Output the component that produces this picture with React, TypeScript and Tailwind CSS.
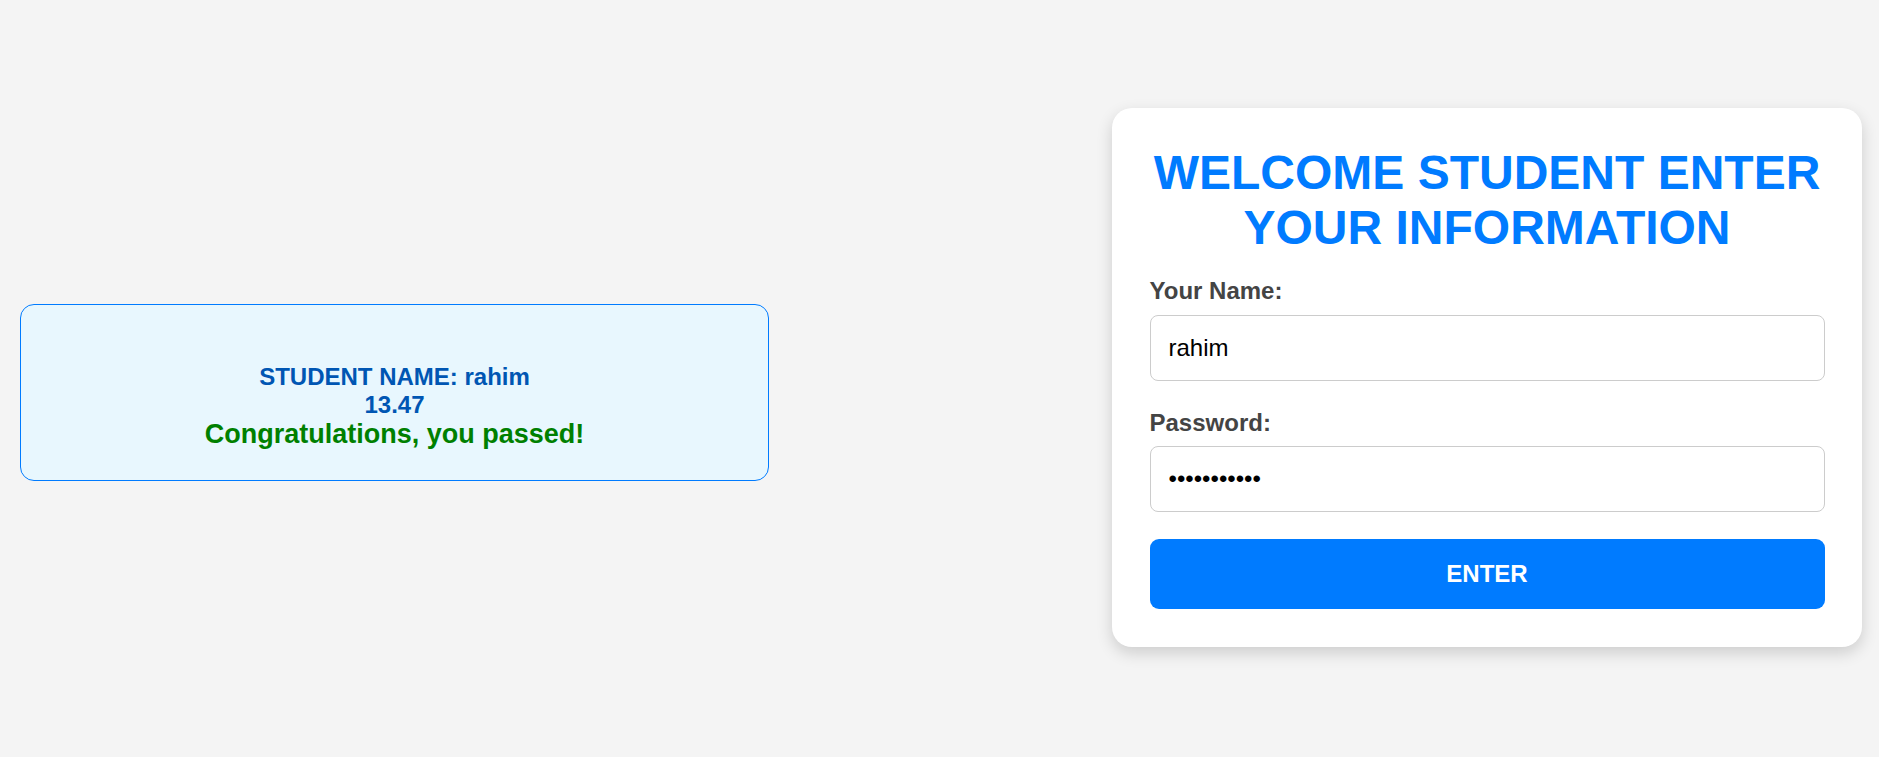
import { useState } from 'react';

function ResultCard({ name, score }: { name: string; score: string }) {
  return (
    <section className="mt-[28px] w-[749px] rounded-[14px] border border-[#007bff] bg-[#e8f7fe] py-[30px] text-center">
      <div className="h-[27.6px]" />
      <p className="text-[24px] font-bold text-[#0056b3]">STUDENT NAME: {name}</p>
      <p className="text-[24px] font-bold text-[#0056b3]">{score}</p>
      <p className="text-[27px] font-bold text-[#008000]">Congratulations, you passed!</p>
    </section>
  );
}

function LoginCard() {
  const [name, setName] = useState('rahim');
  const [password, setPassword] = useState('12345678901');

  return (
    <form
      className="-mt-[2px] w-[750px] rounded-[20px] bg-white px-[37.5px] pt-[37.5px] pb-[38px] shadow-[0_6px_16px_rgba(0,0,0,0.16)]"
      onSubmit={(e) => e.preventDefault()}
    >
      <h1 className="mb-[22px] text-center text-[48px] font-bold text-[#007bff]">
        WELCOME STUDENT ENTER YOUR INFORMATION
      </h1>
      <label className="mb-[9.5px] block text-[24px] font-bold text-[#444]">Your Name:</label>
      <input
        className="mb-[28px] block w-full rounded-[8px] border border-[#ccc] px-[18px] py-[18px] text-[24px] text-black outline-none"
        value={name}
        onChange={(e) => setName(e.target.value)}
      />
      <label className="mb-[9.5px] block text-[24px] font-bold text-[#444]">Password:</label>
      <input
        type="password"
        className="mb-[27px] block w-full rounded-[8px] border border-[#ccc] px-[18px] py-[18px] text-[24px] text-black outline-none"
        value={password}
        onChange={(e) => setPassword(e.target.value)}
      />
      <button
        type="submit"
        className="block w-full rounded-[9px] bg-[#007bff] py-[21px] text-center text-[24px] font-bold text-white"
      >
        ENTER
      </button>
    </form>
  );
}

export default function App() {
  return (
    <div className="flex h-[757px] items-center justify-between bg-[#f4f4f4] pl-[20px] pr-[17px] font-['Liberation_Sans',Arial,sans-serif] leading-[normal]">
      <ResultCard name="rahim" score="13.47" />
      <LoginCard />
    </div>
  );
}
